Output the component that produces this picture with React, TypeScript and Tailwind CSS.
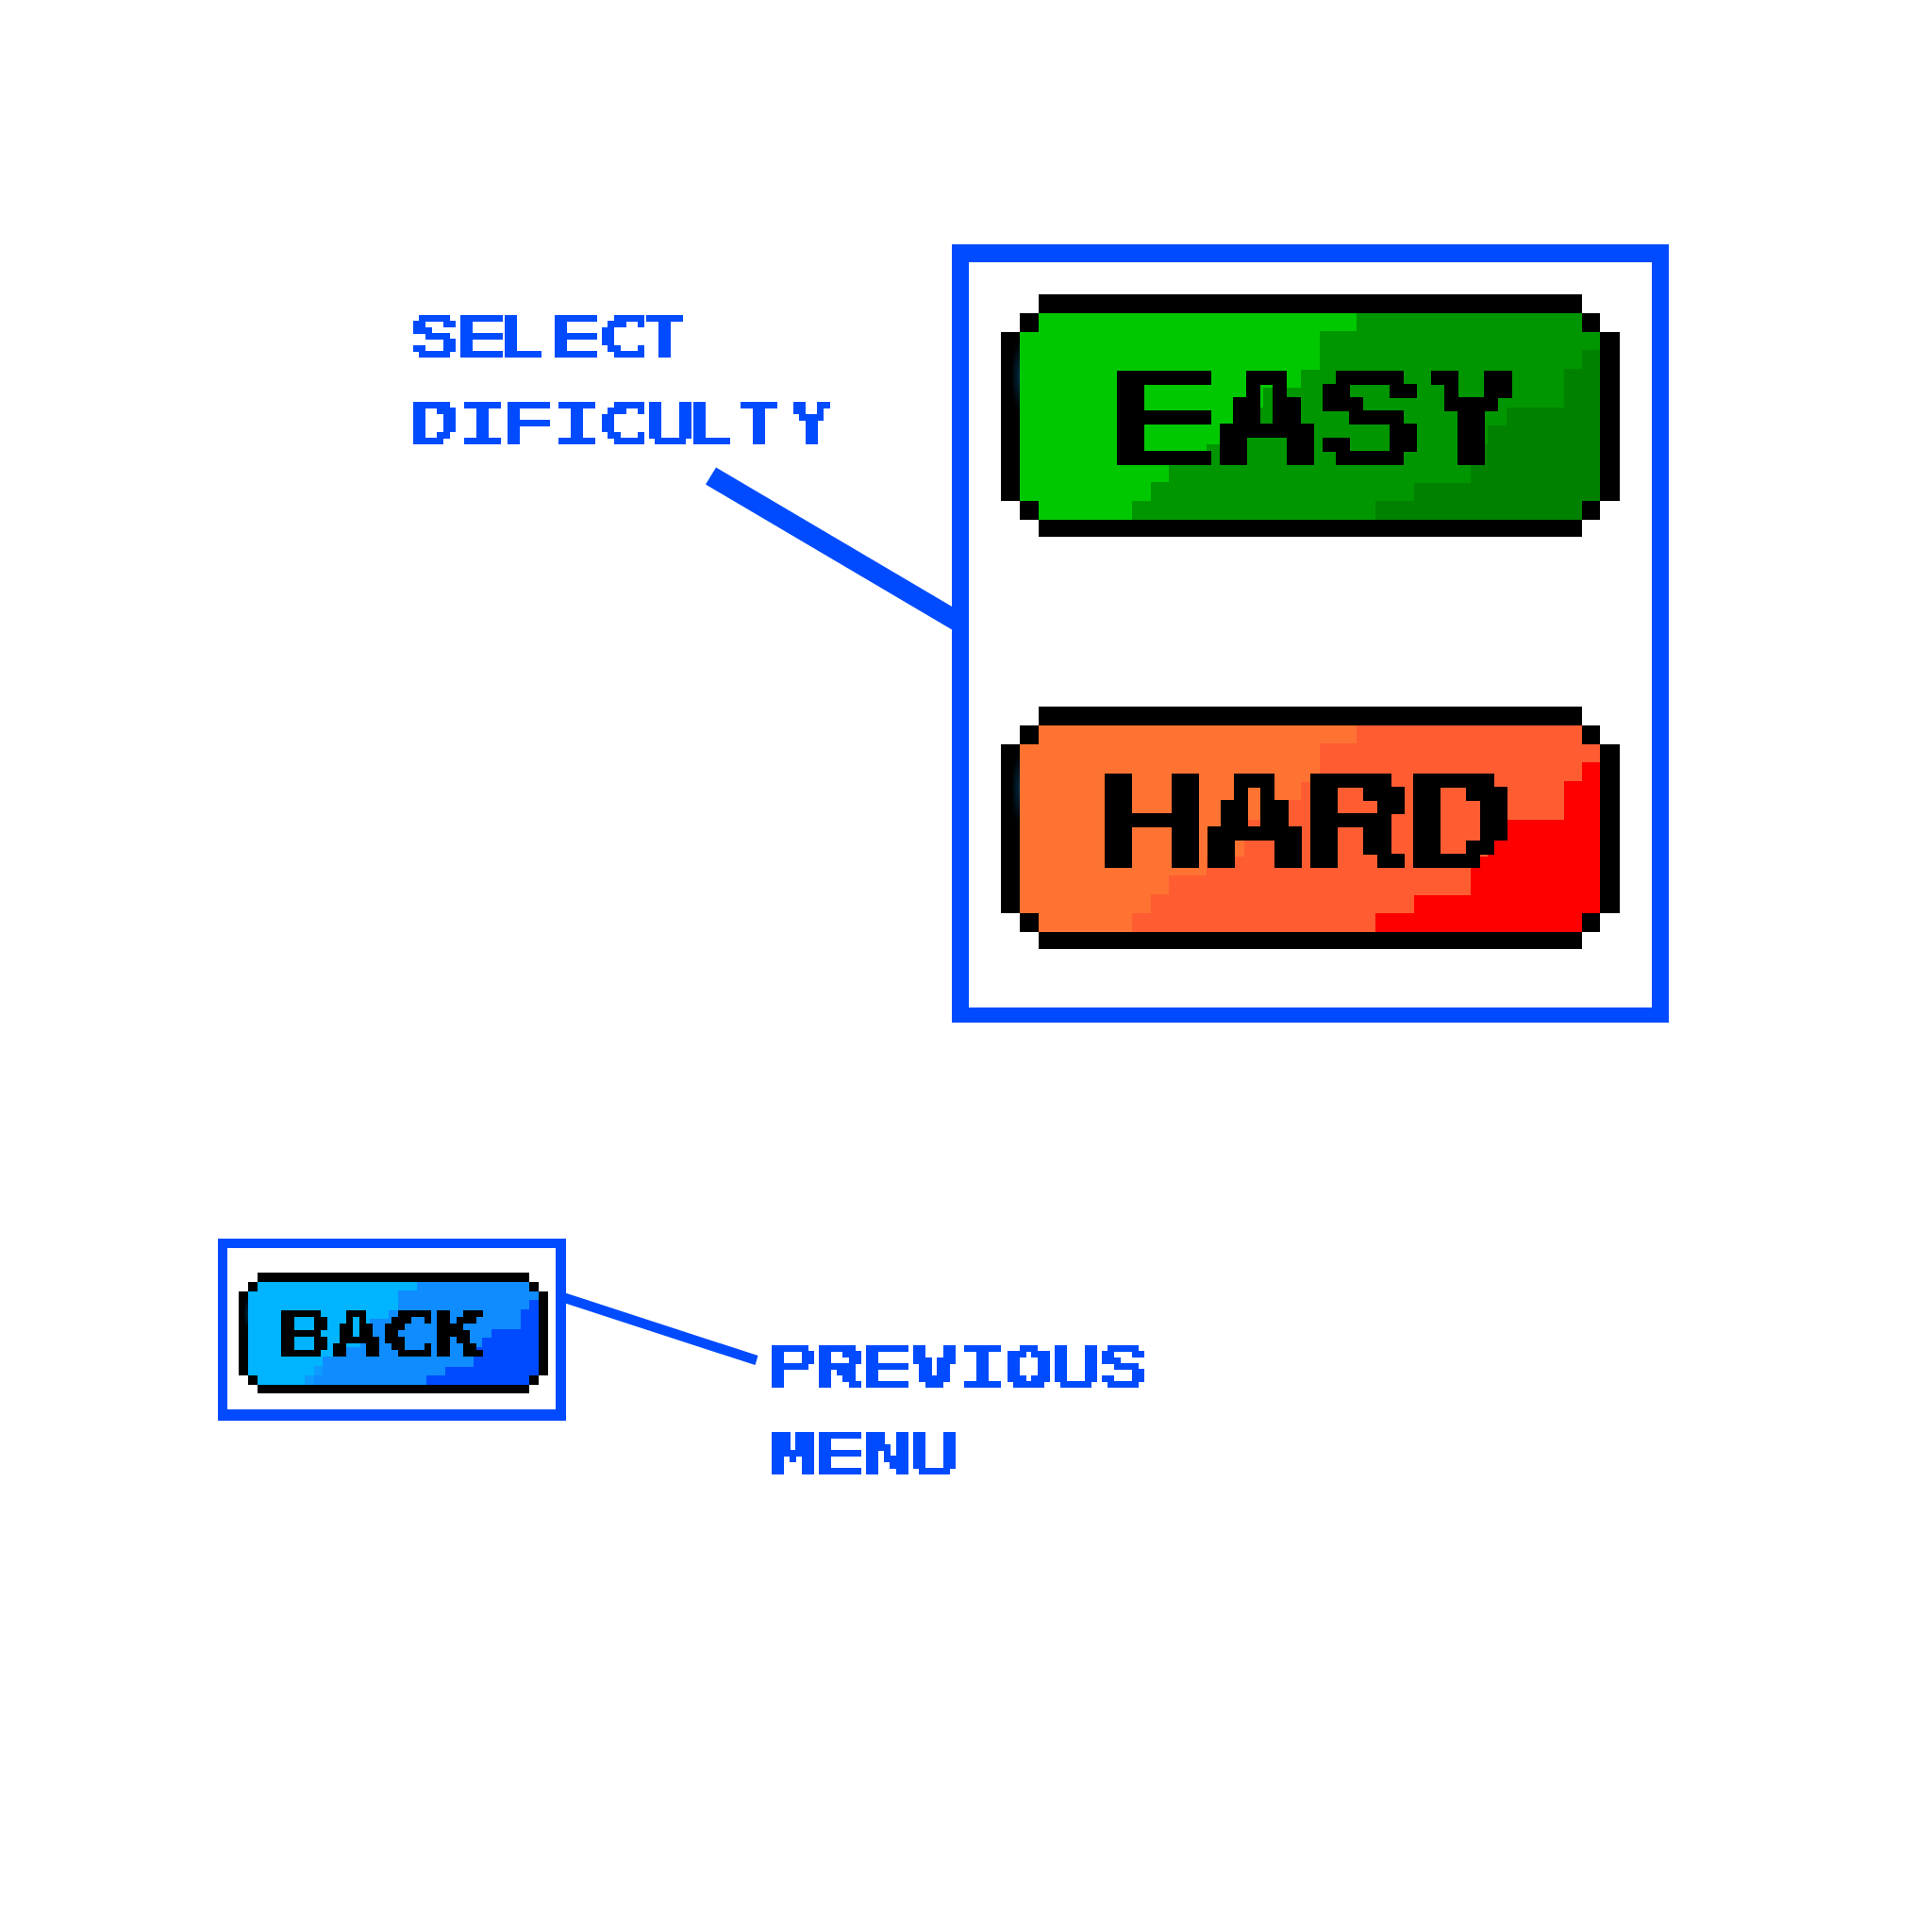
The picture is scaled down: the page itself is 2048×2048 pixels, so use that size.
import React from "react";

const FONT = '"DejaVu Sans Mono", "Liberation Mono", monospace';
const BASE = 100;

type Grid = { id: string; unit: number; radius: number };

const GRIDS = {
  label: { id: "grid-label", unit: 6.43, radius: 3 },
  large: { id: "grid-large", unit: 14.22, radius: 7 },
  small: { id: "grid-small", unit: 7, radius: 3 },
} satisfies Record<string, Grid>;

/** Keeps one sample per cell of a 7x7 grid and grows it to a full square. */
function GridFilter({ id, unit, radius }: Grid) {
  const cells = [0, 1, 2, 3, 4, 5, 6];
  const at = (i: number) => Math.floor(unit * (i + 0.5));
  return (
    <filter
      id={id}
      filterUnits="userSpaceOnUse"
      primitiveUnits="userSpaceOnUse"
      x="-10"
      y="-10"
      width="140"
      height="140"
      colorInterpolationFilters="sRGB"
    >
      {cells.map((i) => (
        <feFlood key={`c${i}`} x={at(i)} y={-10} width={1} height={140} floodColor="#000" result={`c${i}`} />
      ))}
      <feMerge result="cols">
        {cells.map((i) => (
          <feMergeNode key={i} in={`c${i}`} />
        ))}
      </feMerge>
      {cells.map((i) => (
        <feFlood key={`r${i}`} x={-10} y={at(i)} width={140} height={1} floodColor="#000" result={`r${i}`} />
      ))}
      <feMerge result="rows">
        {cells.map((i) => (
          <feMergeNode key={i} in={`r${i}`} />
        ))}
      </feMerge>
      <feComposite in="cols" in2="rows" operator="in" result="dots" />
      <feComposite in="SourceGraphic" in2="dots" operator="in" result="hit" />
      <feMorphology in="hit" operator="dilate" radius={radius} result="blocks" />
      <feComponentTransfer in="blocks">
        <feFuncA type="discrete" tableValues="0 1" />
      </feComponentTransfer>
    </filter>
  );
}

/** Narrow letters: offset from the cell's left edge and width, in grid units. */
const SHAPES: Record<string, [number, number]> = {
  I: [0.6, 6],
  L: [-0.45, 6],
  T: [-0.45, 6],
  Y: [0.4, 6],
};

/** Letters whose outline is laid wider than their cells: left edge and width, in grid units. */
const FITS: Record<string, [number, number]> = {
  A: [-0.6, 8.2],
  V: [-0.5, 8],
  Y: [-0.5, 7],
  S: [-0.35, 7.6],
  R: [0, 7.6],
  B: [0, 7.2],
};

/** Letters that hold the grid better in another face. */
const FACES: Record<string, string> = {
  S: '"Liberation Mono", monospace',
};

/** Extra outline, in px at the base size, for letters with thin diagonals. */
const STROKES: Record<string, number> = { V: 2, K: 3 };

let ctx: CanvasRenderingContext2D | null = null;
function measure(ch: string, face: string) {
  ctx = ctx ?? document.createElement("canvas").getContext("2d")!;
  ctx.font = `bold ${BASE}px ${face}`;
  return ctx.measureText(ch);
}

function PixelText({ text, grid, pitch }: { text: string; grid: Grid; pitch: number }) {
  const size = Math.round(grid.unit * 7);
  return (
    <span className="flex font-bold" style={{ height: size }}>
      {text.split("").map((ch, i) => {
        const face = FACES[ch] ?? FONT;
        const stroke = STROKES[ch] ?? 0;
        const m = measure(ch, face);
        const [dx, cols] = SHAPES[ch] ?? [0, 7];
        const [left, width] = FITS[ch] ?? [0, cols];
        const sx = (width * grid.unit) / (m.actualBoundingBoxLeft + m.actualBoundingBoxRight);
        const sy = size / (m.actualBoundingBoxAscent + m.actualBoundingBoxDescent);
        const baseline =
          (BASE - m.fontBoundingBoxAscent - m.fontBoundingBoxDescent) / 2 + m.fontBoundingBoxAscent;
        const tx = m.actualBoundingBoxLeft * sx + left * grid.unit;
        const ty = -(baseline - m.actualBoundingBoxAscent) * sy;
        const shift = Math.round(dx * grid.unit);
        return (
          <span
            key={i}
            className="block shrink-0"
            style={{
              width: pitch - shift,
              height: size,
              marginLeft: shift,
              filter: `url(#${grid.id})`,
            }}
          >
            <span
              className="block w-[61px] origin-top-left"
              style={{
                fontFamily: face,
                fontSize: BASE,
                lineHeight: `${BASE}px`,
                WebkitTextStroke: stroke ? `${stroke}px currentColor` : undefined,
                transform: `translate(${tx}px, ${ty}px) scale(${sx}, ${sy})`,
              }}
            >
              {ch}
            </span>
          </span>
        );
      })}
    </span>
  );
}

type Tones = { light: string; mid: string; dark: string; seam?: string };

function ButtonFace({ light, mid, dark, seam }: Tones) {
  return (
    <svg viewBox="0 0 656 257" preserveAspectRatio="none" className="absolute inset-0 size-full" shapeRendering="crispEdges">
      <path fill="#000" d="M40 0H616V20H635V40H656V219H635V239H616V257H40V239H20V219H0V40H20V20H40Z" />
      <path fill={light} d="M40 20H616V40H635V219H616V239H40V219H20V40H40Z" />
      <path
        fill={mid}
        d="M377 20H616V40H635V219H616V239H139V219H159V199H178V179H218V159H258V120H278V99H318V80H338V39H377Z"
      />
      {seam && <path fill={seam} d="M159 199H178V219H159V239H139V219H159Z" />}
      <path
        fill={dark}
        d="M616 59H635V219H616V239H397V219H438V200H498V159H516V139H536V120H597V79H616Z"
      />
      <ellipse cx="20" cy="87" rx="9" ry="38" fill="url(#rim-glow)" clipPath="url(#rim)" />
    </svg>
  );
}

function PixelButton({ tones, className, children }: { tones: Tones; className: string; children: React.ReactNode }) {
  return (
    <button className={`relative flex shrink-0 items-start justify-start text-black ${className}`}>
      <ButtonFace {...tones} />
      <span className="relative block">{children}</span>
    </button>
  );
}

const GREEN: Tones = { light: "#00c800", mid: "#009600", dark: "#008200" };
const ORANGE: Tones = { light: "#ff7332", mid: "#ff5c32", dark: "#ff0000" };
const BLUE: Tones = { light: "#00b4ff", mid: "#0f8cff", dark: "#004bff", seam: "#0d9bff" };

export default function App() {
  return (
    <main className="flex h-[2048px] w-[2048px] flex-col overflow-hidden bg-white text-[#004bff]">
      <svg className="absolute size-0">
        <defs>
          <GridFilter {...GRIDS.label} />
          <GridFilter {...GRIDS.large} />
          <GridFilter {...GRIDS.small} />
          <radialGradient id="rim-glow">
            <stop offset="0" stopColor="#002a44" />
            <stop offset="1" stopColor="#000" />
          </radialGradient>
          <clipPath id="rim">
            <rect x="0" y="40" width="20" height="179" />
          </clipPath>
        </defs>
      </svg>

      <section className="relative flex pt-[259px] pl-[438px]">
        <div className="flex w-[571px] shrink-0 flex-col gap-[47px] pt-[75px]">
          <PixelText text="SELECT" grid={GRIDS.label} pitch={50} />
          <PixelText text="DIFICULTY" grid={GRIDS.label} pitch={50} />
        </div>
        <div className="flex h-[825px] w-[760px] shrink-0 flex-col gap-[180px] border-x-[18px] border-t-[19px] border-b-[16px] border-[#004bff] pt-[34px] pl-[34px]">
          <PixelButton tones={GREEN} className="h-[257px] w-[656px] pt-[81px] pl-[123px]">
            <PixelText text="EASY" grid={GRIDS.large} pitch={109} />
          </PixelButton>
          <PixelButton tones={ORANGE} className="h-[257px] w-[656px] pt-[71px] pl-[110px]">
            <PixelText text="HARD" grid={GRIDS.large} pitch={109} />
          </PixelButton>
        </div>
        <svg className="absolute top-[490px] left-[740px] h-[190px] w-[272px]" viewBox="740 490 272 190">
          <polygon points="759,495.5 748,513.5 1010,668 1010,643.5" fill="#004bff" />
        </svg>
      </section>

      <section className="relative mt-[229px] flex pl-[231px]">
        <div className="h-[193px] w-[369px] shrink-0 border-t-[10px] border-r-[11px] border-b-[12px] border-l-[10px] border-[#004bff] pt-[26px] pl-[12px]">
          <PixelButton tones={BLUE} className="h-[128px] w-[328px] pt-[40px] pl-[45px]">
            <PixelText text="BACK" grid={GRIDS.small} pitch={55} />
          </PixelButton>
        </div>
        <svg className="h-[193px] w-[218px] shrink-0" viewBox="600 1313 218 193">
          <polygon points="599,1370.5 803.5,1437 800.5,1447 599,1381.5" fill="#004bff" />
        </svg>
        <div className="flex flex-col gap-[47px] pt-[113px]">
          <PixelText text="PREVIOUS" grid={GRIDS.label} pitch={50} />
          <PixelText text="MENU" grid={GRIDS.label} pitch={50} />
        </div>
      </section>
    </main>
  );
}
